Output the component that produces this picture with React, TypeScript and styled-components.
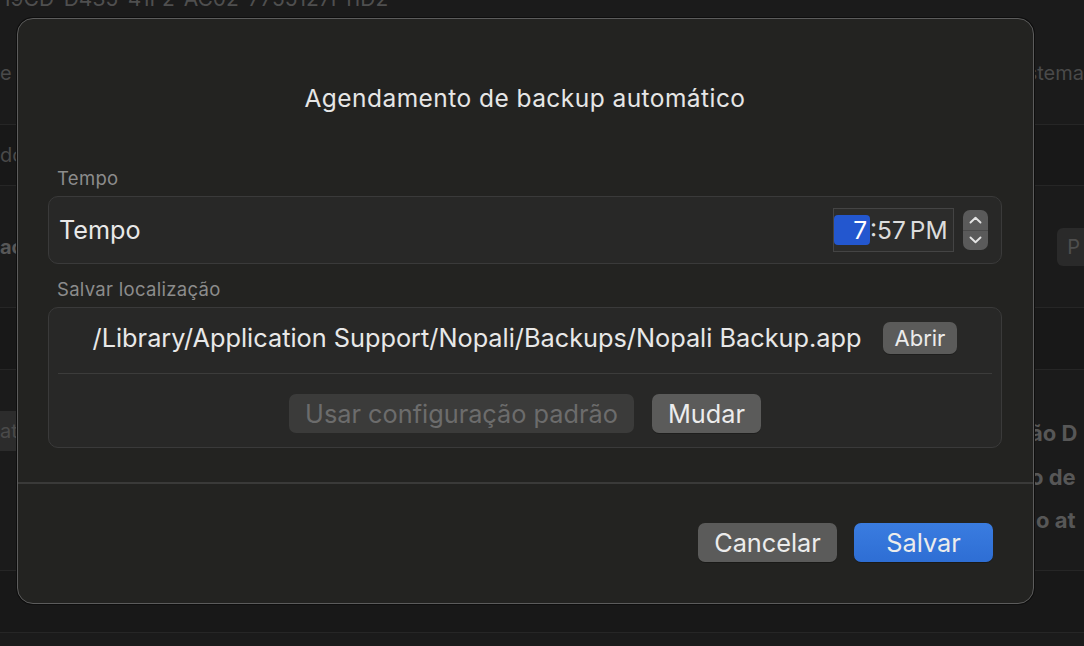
import React from 'react';
import styled, { createGlobalStyle } from 'styled-components';

const GlobalStyle = createGlobalStyle`
  html, body {
    margin: 0;
    padding: 0;
    background: #1b1b1b;
    font-family: Inter, "Noto Sans", "Liberation Sans", sans-serif;
    -webkit-font-smoothing: antialiased;
  }
`;

const Screen = styled.div`
  position: relative;
  width: 1084px;
  height: 646px;
  overflow: hidden;
  background: #1b1b1b;
`;

// page behind the sheet, dimmed
const Backdrop = styled.div`
  display: flex;
  flex-direction: column;
  color: #4d4d4d;
  font-size: 20px;
`;

const Uuid = styled.div`
  margin-top: -13px;
  height: 24px;
  padding-left: 2px;
  font-size: 21px;
  line-height: 24px;
  color: #4f4f4f;
  white-space: nowrap;
`;

const BgRow = styled.div<{ $h: number; $dark?: boolean; $top?: boolean; $pt?: number }>`
  height: ${(p) => p.$h}px;
  box-sizing: border-box;
  padding-top: ${(p) => p.$pt ?? 0}px;
  display: flex;
  align-items: ${(p) => (p.$top ? 'flex-start' : 'center')};
  justify-content: space-between;
  border-bottom: 1px solid #262626;
  background: ${(p) => (p.$dark ? '#181818' : 'transparent')};
  white-space: nowrap;
`;

const BgText = styled.span<{ $bold?: boolean; $box?: boolean }>`
  font-weight: ${(p) => (p.$bold ? 700 : 400)};
  color: ${(p) => (p.$bold ? '#575757' : '#4a4a4a')};
  background: ${(p) => (p.$box ? '#2c2c2c' : 'transparent')};
  padding: ${(p) => (p.$box ? '8px 0' : '0')};
  margin-top: ${(p) => (p.$box ? '41px' : '0')};
`;

const BgLines = styled.div`
  width: 54px;
  margin-top: 42px;
  display: flex;
  flex-direction: column;
  align-items: flex-start;
  font-size: 22px;
  font-weight: 700;
  color: #575757;
  line-height: 43.5px;
`;

const BgButton = styled.span`
  margin-right: -30px;
  padding: 7px 34px 7px 10px;
  border-radius: 6px;
  background: #2a2a2a;
  color: #4e4e4e;
`;

const Sheet = styled.div`
  position: absolute;
  left: 17px;
  top: 18px;
  width: 1017px;
  height: 586px;
  box-sizing: border-box;
  border: 1.5px solid #5c5c5c;
  border-radius: 16px;
  background: #232321;
  box-shadow: 0 0 0 1px #0e0e0e;
  display: flex;
  flex-direction: column;
`;

const Body = styled.div`
  padding: 0 31px 0 30px;
  display: flex;
  flex-direction: column;
`;

const Title = styled.h1`
  margin: 64px 0 0;
  height: 84px;
  text-align: center;
  font-size: 24.5px;
  line-height: 30px;
  font-weight: 400;
  color: #e6e6e6;
  letter-spacing: 0.45px;
`;

const SectionLabel = styled.div`
  padding-left: 9px;
  font-size: 18.5px;
  line-height: 23px;
  letter-spacing: 0.3px;
  color: #8c8c8c;
  margin-bottom: 6px;
`;

const Box = styled.div`
  border: 1px solid #3a3a3a;
  border-radius: 10px;
  background: #282827;
`;

const TimeRow = styled(Box)`
  height: 66px;
  display: flex;
  align-items: center;
  padding: 0 13px 0 10px;
  margin-bottom: 14px;
`;

const RowTitle = styled.span`
  flex: 1;
  font-size: 25.2px;
  color: #e8e8e8;
`;

const TimeField = styled.div`
  height: 44px;
  width: 121px;
  box-sizing: border-box;
  border: 1px solid #444;
  background: #2c2c2b;
  display: flex;
  align-items: center;
  padding-left: 0;
  font-size: 24.5px;
  color: #dcdcdc;
  white-space: nowrap;
`;

const Segment = styled.span<{ $active?: boolean }>`
  display: inline-flex;
  align-items: center;
  justify-content: flex-end;
  height: 30px;
  padding: 0 3px 0 4px;
  min-width: ${(p) => (p.$active ? '29px' : 'auto')};
  border-radius: 4px;
  background: ${(p) => (p.$active ? '#2357cf' : 'transparent')};
  color: ${(p) => (p.$active ? '#ffffff' : '#dcdcdc')};
`;

const Stepper = styled.div`
  margin-left: 9px;
  width: 25px;
  height: 40px;
  border-radius: 7px;
  background: #5a5a5a;
  display: flex;
  flex-direction: column;
  overflow: hidden;
`;

const StepHalf = styled.div<{ $top?: boolean }>`
  flex: 1;
  display: flex;
  align-items: center;
  justify-content: center;
  border-bottom: ${(p) => (p.$top ? '1px solid #4a4a4a' : 'none')};
`;

const LocationBox = styled(Box)`
  display: flex;
  flex-direction: column;
  padding: 0 9px;
`;

const PathRow = styled.div`
  height: 66px;
  box-sizing: border-box;
  padding-bottom: 6px;
  display: flex;
  align-items: center;
  justify-content: center;
  gap: 21px;
  border-bottom: 1.5px solid #3c3c3b;
`;

const PathText = styled.span`
  font-size: 25.3px;
  color: #e8e8e8;
  white-space: nowrap;
`;

const ActionRow = styled.div`
  height: 73px;
  box-sizing: border-box;
  padding-top: 20px;
  display: flex;
  align-items: flex-start;
  justify-content: center;
  gap: 18px;
`;

const Button = styled.button<{ $variant?: 'default' | 'disabled' | 'primary'; $w?: number; $h?: number; $fs?: number }>`
  height: ${(p) => p.$h ?? 39}px;
  width: ${(p) => (p.$w ? `${p.$w}px` : 'auto')};
  padding: 0 16px;
  border: none;
  border-radius: 7px;
  font-family: inherit;
  font-size: ${(p) => p.$fs ?? 25.3}px;
  white-space: nowrap;
  background: ${(p) =>
    p.$variant === 'primary'
      ? 'linear-gradient(#3a7ce0, #2e6ed4)'
      : p.$variant === 'disabled'
      ? '#3b3b3a'
      : '#5b5b5a'};
  color: ${(p) => (p.$variant === 'disabled' ? '#6c6c6c' : '#ececec')};
  box-shadow: ${(p) => (p.$variant === 'disabled' ? 'none' : '0 1px 0 rgba(0,0,0,0.25)')};
`;

const SmallButton = styled(Button)`
  padding: 0 12px;
`;

const Divider = styled.div`
  margin-top: 34px;
  height: 1.5px;
  background: #3a3a39;
`;

const Footer = styled.div`
  display: flex;
  justify-content: flex-end;
  gap: 17px;
  padding: 39px 40px 0 0;
`;

const Chevron = ({ up }: { up?: boolean }) => (
  <svg width="13" height="8" viewBox="0 0 13 8">
    <path
      d={up ? 'M1.5 6.5 L6.5 1.8 L11.5 6.5' : 'M1.5 1.5 L6.5 6.2 L11.5 1.5'}
      fill="none"
      stroke="#e4e4e4"
      strokeWidth="1.9"
      strokeLinecap="round"
      strokeLinejoin="round"
    />
  </svg>
);

export default function App() {
  return (
    <Screen>
      <GlobalStyle />
      <Backdrop>
        <Uuid>19CD-D435-41F2-AC02-7755127F11D2</Uuid>
        <BgRow $h={114} $pt={10}>
          <BgText>e e</BgText>
          <BgText>stema</BgText>
        </BgRow>
        <BgRow $h={61} $dark>
          <BgText>do</BgText>
          <BgText></BgText>
        </BgRow>
        <BgRow $h={122}>
          <BgText $bold>ac</BgText>
          <BgButton>P</BgButton>
        </BgRow>
        <BgRow $h={62} $dark>
          <BgText></BgText>
          <BgText></BgText>
        </BgRow>
        <BgRow $h={201} $top>
          <BgText $box>at</BgText>
          <BgLines>
            <span>ão D</span>
            <span>o de</span>
            <span>lo at</span>
          </BgLines>
        </BgRow>
        <BgRow $h={62} $dark>
          <BgText></BgText>
          <BgText></BgText>
        </BgRow>
      </Backdrop>

      <Sheet>
        <Body>
          <Title>Agendamento de backup automático</Title>

          <SectionLabel>Tempo</SectionLabel>
          <TimeRow>
            <RowTitle>Tempo</RowTitle>
            <TimeField>
              <Segment $active>7</Segment>
              <span>:57</span>
              <Segment>PM</Segment>
            </TimeField>
            <Stepper>
              <StepHalf $top>
                <Chevron up />
              </StepHalf>
              <StepHalf>
                <Chevron />
              </StepHalf>
            </Stepper>
          </TimeRow>

          <SectionLabel>Salvar localização</SectionLabel>
          <LocationBox>
            <PathRow>
              <PathText>/Library/Application Support/Nopali/Backups/Nopali Backup.app</PathText>
              <SmallButton $h={32} $fs={22}>
                Abrir
              </SmallButton>
            </PathRow>
            <ActionRow>
              <Button $variant="disabled">Usar configuração padrão</Button>
              <Button>Mudar</Button>
            </ActionRow>
          </LocationBox>
        </Body>

        <Divider />

        <Footer>
          <Button $w={139}>Cancelar</Button>
          <Button $variant="primary" $w={139}>
            Salvar
          </Button>
        </Footer>
      </Sheet>
    </Screen>
  );
}
